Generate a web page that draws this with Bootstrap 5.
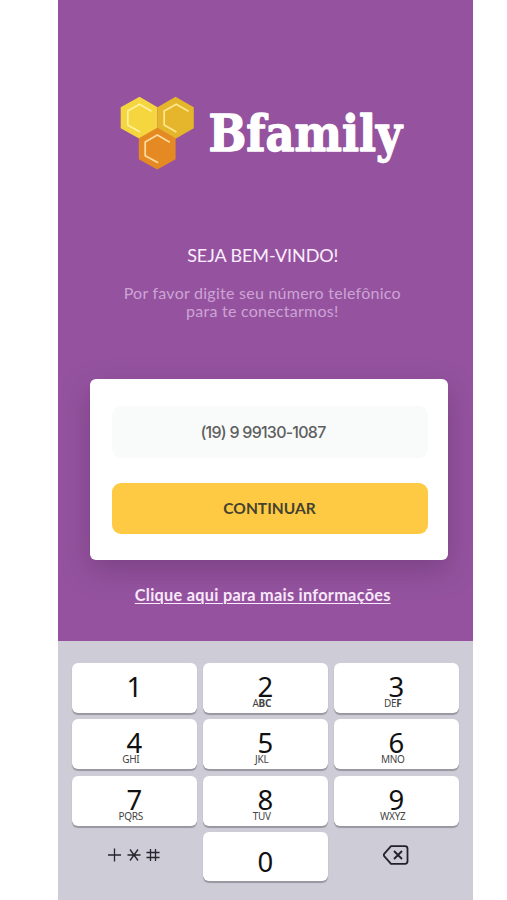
<!DOCTYPE html>
<html lang="pt-BR">
<head>
<meta charset="utf-8">
<meta name="viewport" content="width=device-width, initial-scale=1">
<title>Bfamily</title>
<link href="https://cdn.jsdelivr.net/npm/bootstrap@5.3.0/dist/css/bootstrap.min.css" rel="stylesheet">
<style>
body{background:#fff;overflow:hidden}
.phone{width:415px;height:900px;margin-left:57.5px;font-family:Lato,"Open Sans",sans-serif}
.welcome{height:640.5px;background:#95539f;padding:92px 25px 0 32.5px}
.logo{display:block;width:300px;height:86px;margin-left:22.5px;overflow:visible}
.hello{margin-top:66px;font-size:18px;line-height:22px;letter-spacing:-.1px;color:#fbeefe;padding-right:12px}
.hint{margin-top:18px;font-size:16px;line-height:18px;letter-spacing:.25px;color:#cda3d6;padding-right:13px}
.login-box{height:181.5px;margin-top:58.6px;border:0;border-radius:6px;padding:27px 20px 0 21.5px;box-shadow:0 10px 28px rgba(70,35,80,.34)}
.phone-field{height:52px;border:0;border-radius:9px;background:#f9fafa;color:#5d5f60;font:500 16px/52px Inter,sans-serif;padding:0 13px 0 0;letter-spacing:-.75px}
.phone-field:focus{box-shadow:none;background:#f9fafa}
.go{height:51px;margin-top:25px;border-radius:9px;border:0;background:#ffca43;color:#45432f;font-size:15.5px;font-weight:700;line-height:51px;padding:0}
.go:hover{background:#f8c038}
.more{margin-top:24px;padding-right:12px;line-height:22px}
.more a{font-size:16.3px;letter-spacing:.28px;font-weight:700;color:#fbeafd;text-decoration-thickness:1px;text-underline-offset:2px}
.pad{height:259.5px;background:#cecdd7;padding:22px 13.5px 0 14px;display:grid;grid-template-columns:repeat(3,1fr);grid-template-rows:50px 50px 50px 49px;gap:6.6px 5.5px;font-family:"Noto Sans","Open Sans",sans-serif}
.digit{display:block;background:#fff;border:0;border-radius:6px;box-shadow:0 1.5px 1px #98979f;color:#111;padding:0;font-size:27.5px;line-height:30px}
.digit span{display:block;height:32px;line-height:30px;padding-top:9px;margin-top:-4px}
.digit small{display:block;font-size:10px;line-height:12px;letter-spacing:-.3px;color:#444;padding-right:7px;margin-top:2px}
.zero span{padding-top:8px}
.ghost{background:none;border:0;padding:0 0 7px}
</style>
</head>
<body>
<main class="phone d-flex flex-column">
<section class="welcome text-center">
<svg class="logo" viewBox="112.5 92 300 86" role="img" aria-label="Bfamily">
<path fill="#f5d63e" d="M139 96.700l18 10.600v21l-18 10.400-18.800-10.400v-21z"/>
<path fill="#e5b52b" d="M175 96.700l18.300 10.600v21L175 138.700l-18-10.400v-21z"/>
<path fill="#e58a22" d="M156.800 127.700l18.300 10.600v21l-18.300 10.200-18.500-10.200v-21z"/>
<g fill="none" stroke-width="1.7">
<path stroke="#fff1a0" d="M151 111.300l-12-7-11.700 6.800V125l12.200 7"/>
<path stroke="#ffe78f" d="M188 111.300l-12.300-7-12 6.800V125l12.200 7"/>
<path stroke="#ffdca0" d="M169.300 142.300l-12.500-7.300-12.100 6.900v13.800l13 7"/>
</g>
<text x="208" y="151" fill="#fff" stroke="#fff" stroke-width="1.4" stroke-linejoin="round" font-family="DejaVu Serif,serif" font-weight="700" font-size="50" textLength="193.500" lengthAdjust="spacingAndGlyphs">Bfamily</text>
</svg>
<div class="hello">SEJA BEM-VINDO!</div>
<div class="hint">Por favor digite seu número telefônico<br>para te conectarmos!</div>
<div class="card login-box">
<input class="form-control phone-field text-center" type="tel" value="(19) 9 99130-1087" aria-label="Telefone">
<button class="btn go w-100" type="button">CONTINUAR</button>
</div>
<div class="more"><a href="#">Clique aqui para mais informações</a></div>
</section>
<section class="pad">
<button class="digit"><span>1</span><small>&nbsp;</small></button>
<button class="digit"><span>2</span><small>A<b>BC</b></small></button>
<button class="digit"><span>3</span><small>DE<b>F</b></small></button>
<button class="digit"><span>4</span><small>GHI</small></button>
<button class="digit"><span>5</span><small>JKL</small></button>
<button class="digit"><span>6</span><small>MNO</small></button>
<button class="digit"><span>7</span><small>PQRS</small></button>
<button class="digit"><span>8</span><small>TUV</small></button>
<button class="digit"><span>9</span><small>WXYZ</small></button>
<button class="ghost" aria-label="Símbolos"><svg width="54" height="16" viewBox="0 0 54 16" fill="none" stroke="#25252b" stroke-width="1.3"><path d="M1 8h13M7.500 1.500v13M20.500 8h13M23 2.500l8 11M31 2.500l-8 11M43.500 2v12M48.500 2v12M39.500 5.500h13M39.500 10.500h13"/></svg></button>
<button class="digit zero"><span>0</span></button>
<button class="ghost" aria-label="Apagar"><svg width="26" height="20" viewBox="0 0 26 20" fill="none" stroke="#22222b" stroke-width="1.8" stroke-linejoin="round"><path d="M8 1.200h14a2.500 2.500 0 0 1 2.500 2.500v12.600a2.500 2.500 0 0 1-2.500 2.500H8L1.200 11.200q-.8-1.200 0-2.400zM11 6l8 8M19 6l-8 8"/></svg></button>
</section>
</main>
<script src="https://cdn.jsdelivr.net/npm/bootstrap@5.3.0/dist/js/bootstrap.bundle.min.js"></script>
</body>
</html>
